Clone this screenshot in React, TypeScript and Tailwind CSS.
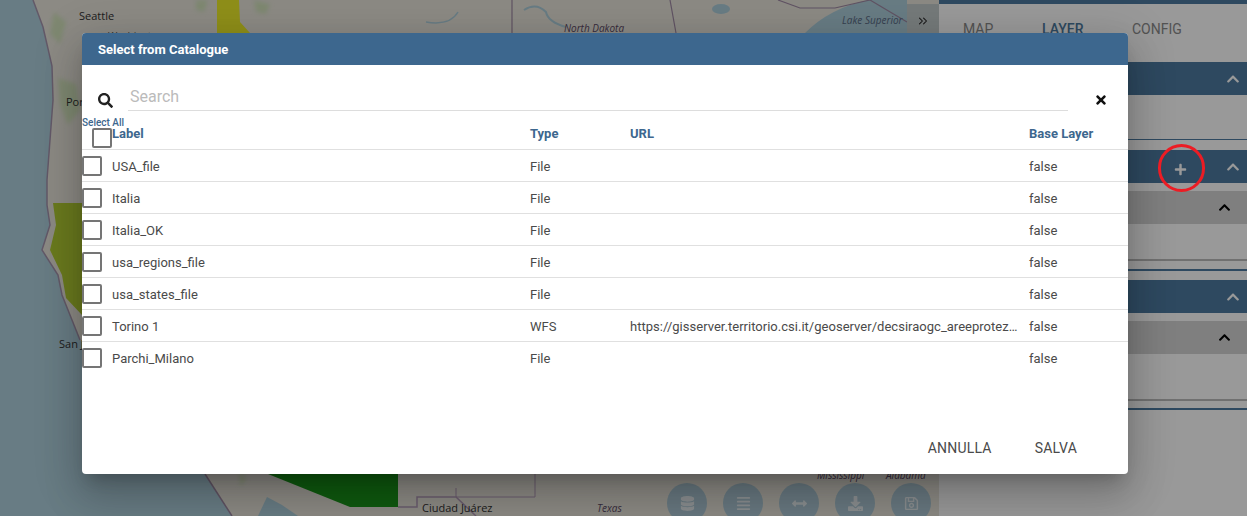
import { ChevronsRight } from 'lucide-react';
import { FaAlignJustify, FaArrowsAltH, FaChevronUp, FaDatabase, FaDownload, FaPlus, FaRegSave, FaSearch, FaTimes } from 'react-icons/fa';

const ROWS = [
  { label: 'USA_file', type: 'File', url: '' },
  { label: 'Italia', type: 'File', url: '' },
  { label: 'Italia_OK', type: 'File', url: '' },
  { label: 'usa_regions_file', type: 'File', url: '' },
  { label: 'usa_states_file', type: 'File', url: '' },
  { label: 'Torino 1', type: 'WFS', url: 'https://gisserver.territorio.csi.it/geoserver/decsiraogc_areeprotezione/wfs' },
  { label: 'Parchi_Milano', type: 'File', url: '' },
];

const MAP_BUTTONS = [FaDatabase, FaAlignJustify, FaArrowsAltH, FaDownload, FaRegSave];

const MapView = () => (
  <div className="relative h-full w-[939px] shrink-0 overflow-hidden bg-[#adcfdc]">
    <svg className="absolute inset-0" width="939" height="516" viewBox="0 0 939 516">
      <defs>
        <filter id="soft">
          <feGaussianBlur stdDeviation="2" />
        </filter>
      </defs>
      {/* land */}
      <path
        d="M33 0 L43 27 L52 66 L53 100 L47 180 L47 205 L50 225 L42 250 L58 275 L62 295 L72 320 L80 340 L205 474 L232 516 L939 516 L939 0 Z"
        fill="#e9e6dc"
      />
      <path d="M267 497 L282 505 L298 516 L258 516 Z" fill="#adcfdc" />
      {/* forest patches */}
      <g fill="#d3e3bc" filter="url(#soft)">
        <path d="M58 78 L76 84 L80 110 L68 125 L60 104 Z" />
        <path d="M54 12 L66 22 L60 44 L50 34 Z" />
        <path d="M196 0 L208 0 L204 12 L196 10 Z" />
        <path d="M254 0 L270 4 L266 14 L256 12 Z" />
        <path d="M240 470 L246 480 L240 486 Z" />
      </g>
      {/* lakes and rivers */}
      <ellipse cx="721" cy="9" rx="9" ry="5" fill="#adcfdc" />
      <path d="M805 33 Q830 8 868 0 L907 0 L907 33 Z" fill="#adcfdc" />
      <path d="M524 10 Q536 2 546 12 Q548 22 566 27" stroke="#adcfdc" strokeWidth="2" fill="none" />
      <path d="M426 22 Q450 26 458 12" stroke="#adcfdc" strokeWidth="1.5" fill="none" />
      {/* borders */}
      <path d="M33 0 L43 27 L52 66 L53 100 L47 180 L47 205 L50 225 L42 250 L58 275 L62 295 L72 320 L80 340" stroke="#a595ae" strokeWidth="1.5" fill="none" />
      <path d="M512 0 L512 33 M670 0 L676 33 M778 0 L800 8 L835 8 L870 0 L907 22" stroke="#a08aa5" strokeWidth="1.2" fill="none" />
      <path d="M205 474 L232 516" stroke="#a08aa5" strokeWidth="1.5" fill="none" />
      <path d="M398 507 L417 507 L417 497 L456 497 L476 516" stroke="#b39ab8" strokeWidth="1.5" fill="none" />
      <path d="M535 474 L535 497 L456 497 L456 488" stroke="#b39ab8" strokeWidth="1" fill="none" />
      {/* layer shapes */}
      <path d="M217 0 L239 0 L240 22 L250 33 L217 33 Z" fill="#eeee2b" />
      <path d="M53 203 L82 203 L82 315 L66 298 L62 275 L50 250 L56 225 Z" fill="#b1cc32" />
      <path d="M268 474 L398 474 L398 507 L350 507 Z" fill="#199619" />
    </svg>
    <span className="absolute left-[79px] top-[8px] text-[11px] leading-[16px] text-[#333] font-['Open_Sans',sans-serif]">Seattle</span>
    <span className="absolute left-[108px] top-[29px] text-[10px] text-[#555] font-['Open_Sans',sans-serif]">Washington</span>
    <span className="absolute left-[66px] top-[94px] text-[11px] text-[#333] font-['Open_Sans',sans-serif]">Portland</span>
    <span className="absolute left-[59px] top-[336px] text-[11px] text-[#333] font-['Open_Sans',sans-serif]">San Jose</span>
    <span className="absolute left-[564px] top-[21px] text-[10px] italic text-[#5c4a66] font-['Open_Sans',sans-serif]">North Dakota</span>
    <span className="absolute left-[842px] top-[13px] text-[10px] italic text-[#5c6c86] font-['Open_Sans',sans-serif]">Lake Superior</span>
    <span className="absolute left-[422px] top-[500px] text-[11px] text-[#333] font-['Open_Sans',sans-serif]">Ciudad Juárez</span>
    <span className="absolute left-[597px] top-[501px] text-[10px] italic text-[#5c4a66] font-['Open_Sans',sans-serif]">Texas</span>
    <span className="absolute left-[817px] top-[468px] text-[10px] italic text-[#5c4a66] font-['Open_Sans',sans-serif]">Mississippi</span>
    <span className="absolute left-[886px] top-[468px] text-[10px] italic text-[#5c4a66] font-['Open_Sans',sans-serif]">Alabama</span>
    <div className="absolute right-0 top-[4px] flex h-[40px] w-[32px] items-center justify-center bg-[#c4cbcc] pb-[6px] text-[#222]">
      <ChevronsRight size={14} strokeWidth={1.75} />
    </div>
    <div className="absolute left-[667px] top-[483px] flex gap-[16px]">
      {MAP_BUTTONS.map((Icon, i) => (
        <div key={i} className="flex h-[40px] w-[40px] items-center justify-center rounded-full bg-[#aec9d6] text-[#e6edf0]">
          <Icon className="text-[15px]" />
        </div>
      ))}
    </div>
  </div>
);

const SidePanel = () => (
  <div className="flex h-full flex-1 flex-col bg-white font-['Roboto',sans-serif]">
    <div className="h-[4px] bg-[#4e7ba0]" />
    <div className="flex h-[58px] items-start pt-[15px] text-[14px] text-[#8a8a8a]">
      <span className="ml-[24px] w-[79px]">MAP</span>
      <span className="w-[90px] font-medium text-[#4e7ba0]">LAYER</span>
      <span>CONFIG</span>
    </div>
    <div className="flex h-[33px] items-center justify-end bg-[#4e7ba0] pr-[7px] text-white">
      <FaChevronUp className="text-[14px]" />
    </div>
    <div className="h-[45px] border-b border-[#4e7ba0]" />
    <div className="mt-[10px] flex h-[33px] items-center justify-end bg-[#4e7ba0] pr-[7px] text-white">
      <FaPlus className="mr-[39px] mt-[6px] text-[13px]" />
      <FaChevronUp className="text-[14px]" />
    </div>
    <div className="mt-[8px] flex h-[33px] items-center justify-end bg-[#d4d4d4] pr-[16px] text-black">
      <FaChevronUp className="text-[13px]" />
    </div>
    <div className="h-[37px] border-b-2 border-[#bbb]" />
    <div className="mt-[8px] h-[2px] bg-[#4e7ba0]" />
    <div className="mt-[9px] flex h-[33px] items-center justify-end bg-[#4e7ba0] pr-[7px] text-white">
      <FaChevronUp className="text-[14px]" />
    </div>
    <div className="mt-[8px] flex h-[33px] items-center justify-end bg-[#d4d4d4] pr-[16px] text-black">
      <FaChevronUp className="text-[13px]" />
    </div>
    <div className="h-[47px] border-b-2 border-[#bbb]" />
    <div className="mt-[7px] h-[2px] bg-[#4e7ba0]" />
  </div>
);

const CatalogueDialog = () => (
  <div className="absolute left-[82px] top-[33px] flex h-[441px] w-[1046px] flex-col overflow-hidden rounded-[4px] bg-white font-['Roboto',sans-serif] text-[13px] text-[#4a4a4a] shadow-[0_11px_15px_-7px_rgba(0,0,0,0.2),0_24px_38px_3px_rgba(0,0,0,0.14),0_9px_46px_8px_rgba(0,0,0,0.12)]">
    <div className="flex h-[32px] shrink-0 items-center bg-[#3d678e] pl-[16px] pt-[1px] text-[13px] font-bold text-white">Select from Catalogue</div>

    <div className="flex h-[46px] shrink-0 items-start pl-[16px] pt-[13px]">
      <FaSearch className="mt-[15px] text-[15px] text-[#222]" />
      <div className="ml-[15px] h-[33px] w-[940px] border-b border-[#ddd] pl-[2px] pt-[7px] text-[16px] leading-[24px] text-[#bbb]">Search</div>
      <FaTimes className="ml-[26px] mt-[15px] text-[14px] text-[#111]" />
    </div>

    {/* table header */}
    <div className="relative flex h-[39px] shrink-0 border-b border-[#e0e0e0] pt-[15px] font-bold leading-[16px] text-[#3d678e]">
      <span className="absolute left-0 top-[6px] text-[10px] font-medium leading-[12px]">Select All</span>
      <span className="absolute left-[10px] top-[17px] h-[20px] w-[20px] rounded-[2px] border-2 border-[#757575] bg-white" />
      <span className="ml-[30px] w-[418px]">Label</span>
      <span className="w-[100px]">Type</span>
      <span className="w-[399px]">URL</span>
      <span>Base Layer</span>
    </div>

    {ROWS.map((row, i) => (
      <div key={row.label} className={`flex h-[32px] shrink-0 items-center ${i < ROWS.length - 1 ? 'border-b border-[#e0e0e0]' : ''}`}>
        <span className="h-[20px] w-[20px] shrink-0 rounded-[2px] border-2 border-[#757575]" />
        <span className="ml-[10px] w-[418px] pt-[2px]">{row.label}</span>
        <span className="w-[100px] pt-[2px]">{row.type}</span>
        <span className="w-[399px] truncate pr-[10px] pt-[2px] tracking-[0.02px]">{row.url}</span>
        <span className="pt-[2px]">false</span>
      </div>
    ))}

    <div className="mt-auto flex h-[52px] shrink-0 items-start justify-end pr-[51px] pt-[16px] text-[14px] tracking-[0.2px] text-[#4a4a4a]">
      <span>ANNULLA</span>
      <span className="ml-[43px]">SALVA</span>
    </div>
  </div>
);

export default function App() {
  return (
    <div className="relative flex h-[516px] w-[1247px] overflow-hidden">
      <MapView />
      <SidePanel />
      {/* backdrop */}
      <div className="absolute inset-0 bg-black/40" />
      <CatalogueDialog />
      {/* red marker drawn over the screenshot */}
      <div className="absolute left-[1158px] top-[144px] h-[48px] w-[47px] rounded-full border-[3px] border-[#ec1c24]" />
    </div>
  );
}
